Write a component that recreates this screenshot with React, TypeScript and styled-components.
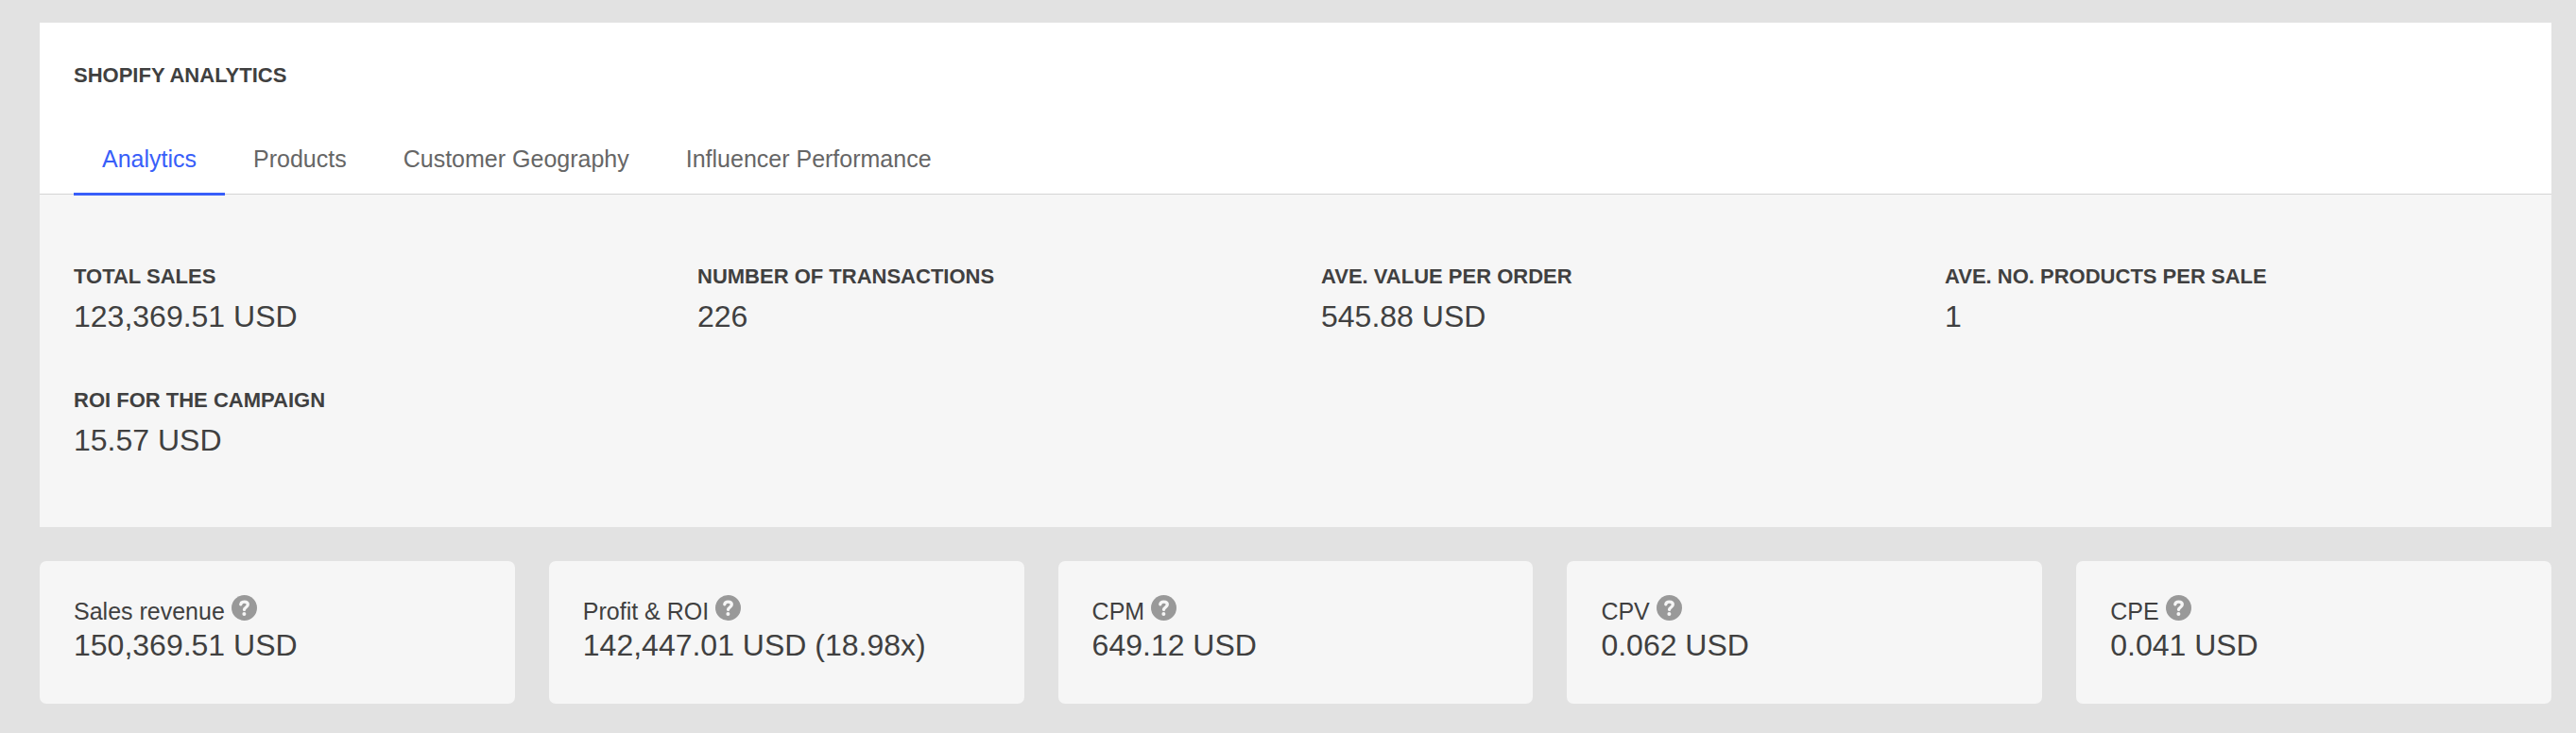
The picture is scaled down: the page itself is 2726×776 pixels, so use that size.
import React from "react";
import styled, { createGlobalStyle } from "styled-components";

const GlobalStyle = createGlobalStyle`
  * { box-sizing: border-box; }
  html { background: #e2e2e2; }
  body { margin: 0; color: #404040; font-family: "Liberation Sans", Arial, sans-serif; }
  h2, dl, dt, dd { margin: 0; }
`;

const Page = styled.main`
  display: grid;
  gap: 36px;
  padding: 24px 26px 31px 42px;
`;

const Panel = styled.section`
  background: #f6f6f6;
`;

const PanelHeader = styled.header`
  padding: 40px 36px 0;
  background: #fff;
  border-bottom: 1px solid #d5d5d5;
`;

const Title = styled.h2`
  font-size: 22px;
  line-height: 32px;
  font-weight: 700;
  text-transform: uppercase;
`;

const Tabs = styled.nav`
  display: flex;
  margin-top: 36px;
  margin-bottom: -2px;
`;

const Tab = styled.button<{ $active: boolean }>`
  height: 75px;
  padding: 0 30px;
  border: 0;
  border-bottom: 3px solid ${(p) => (p.$active ? "#385ef9" : "transparent")};
  background: none;
  color: ${(p) => (p.$active ? "#385ef9" : "#666")};
  font-family: inherit;
  font-size: 25px;
  cursor: pointer;
`;

const Stats = styled.dl`
  display: grid;
  grid-template-columns: repeat(4, 1fr);
  gap: 47px 54px;
  padding: 68px 36px 69px;
`;

const Stat = styled.div`
  min-width: 0;
`;

const StatLabel = styled.dt`
  font-size: 22px;
  line-height: 38px;
  font-weight: 700;
  text-transform: uppercase;
`;

const StatValue = styled.dd`
  font-size: 32px;
  line-height: 46px;
`;

const Cards = styled.dl`
  display: grid;
  grid-template-columns: repeat(5, 1fr);
  gap: 36px;
`;

const Card = styled.div`
  padding: 36px 36px 43px;
  background: #f6f6f6;
  border-radius: 7px;
`;

const CardLabel = styled.dt`
  display: flex;
  align-items: flex-start;
  gap: 7px;
  font-size: 25px;
  line-height: 34px;
`;

const CardValue = styled.dd`
  font-size: 32px;
  line-height: 38px;
`;

const HelpButton = styled.button`
  display: block;
  padding: 0;
  border: 0;
  background: none;
  color: #999;
  cursor: pointer;

  svg {
    display: block;
    width: 27px;
    height: 27px;
  }
`;

const HelpIcon = () => (
  <svg viewBox="0 0 27 27" aria-hidden="true">
    <circle cx="13.5" cy="13.5" r="13.5" fill="currentColor" />
    <path
      d="M9.8 9.8C10.1 8.1 11.5 7.1 13.5 7.1c2.3 0 3.8 1.1 3.8 3 0 2.9-3.7 2.8-3.8 5.3"
      fill="none"
      stroke="#f6f6f6"
      strokeWidth="3.3"
      strokeLinecap="round"
      strokeLinejoin="round"
    />
    <circle cx="13.4" cy="20" r="2" fill="#f6f6f6" />
  </svg>
);

const tabs = ["Analytics", "Products", "Customer Geography", "Influencer Performance"];

const stats = [
  { label: "Total sales", value: "123,369.51 USD" },
  { label: "Number of transactions", value: "226" },
  { label: "Ave. value per order", value: "545.88 USD" },
  { label: "Ave. no. products per sale", value: "1" },
  { label: "ROI for the campaign", value: "15.57 USD" },
];

const cards = [
  { label: "Sales revenue", value: "150,369.51 USD" },
  { label: "Profit & ROI", value: "142,447.01 USD (18.98x)" },
  { label: "CPM", value: "649.12 USD" },
  { label: "CPV", value: "0.062 USD" },
  { label: "CPE", value: "0.041 USD" },
];

export default function App() {
  const [active, setActive] = React.useState(tabs[0]);

  return (
    <>
      <GlobalStyle />
      <Page>
        <Panel>
          <PanelHeader>
            <Title>Shopify Analytics</Title>
            <Tabs>
              {tabs.map((tab) => (
                <Tab key={tab} type="button" $active={tab === active} onClick={() => setActive(tab)}>
                  {tab}
                </Tab>
              ))}
            </Tabs>
          </PanelHeader>
          <Stats>
            {stats.map(({ label, value }) => (
              <Stat key={label}>
                <StatLabel>{label}</StatLabel>
                <StatValue>{value}</StatValue>
              </Stat>
            ))}
          </Stats>
        </Panel>
        <Cards>
          {cards.map(({ label, value }) => (
            <Card key={label}>
              <CardLabel>
                {label}
                <HelpButton type="button" aria-label={`About ${label}`}>
                  <HelpIcon />
                </HelpButton>
              </CardLabel>
              <CardValue>{value}</CardValue>
            </Card>
          ))}
        </Cards>
      </Page>
    </>
  );
}
